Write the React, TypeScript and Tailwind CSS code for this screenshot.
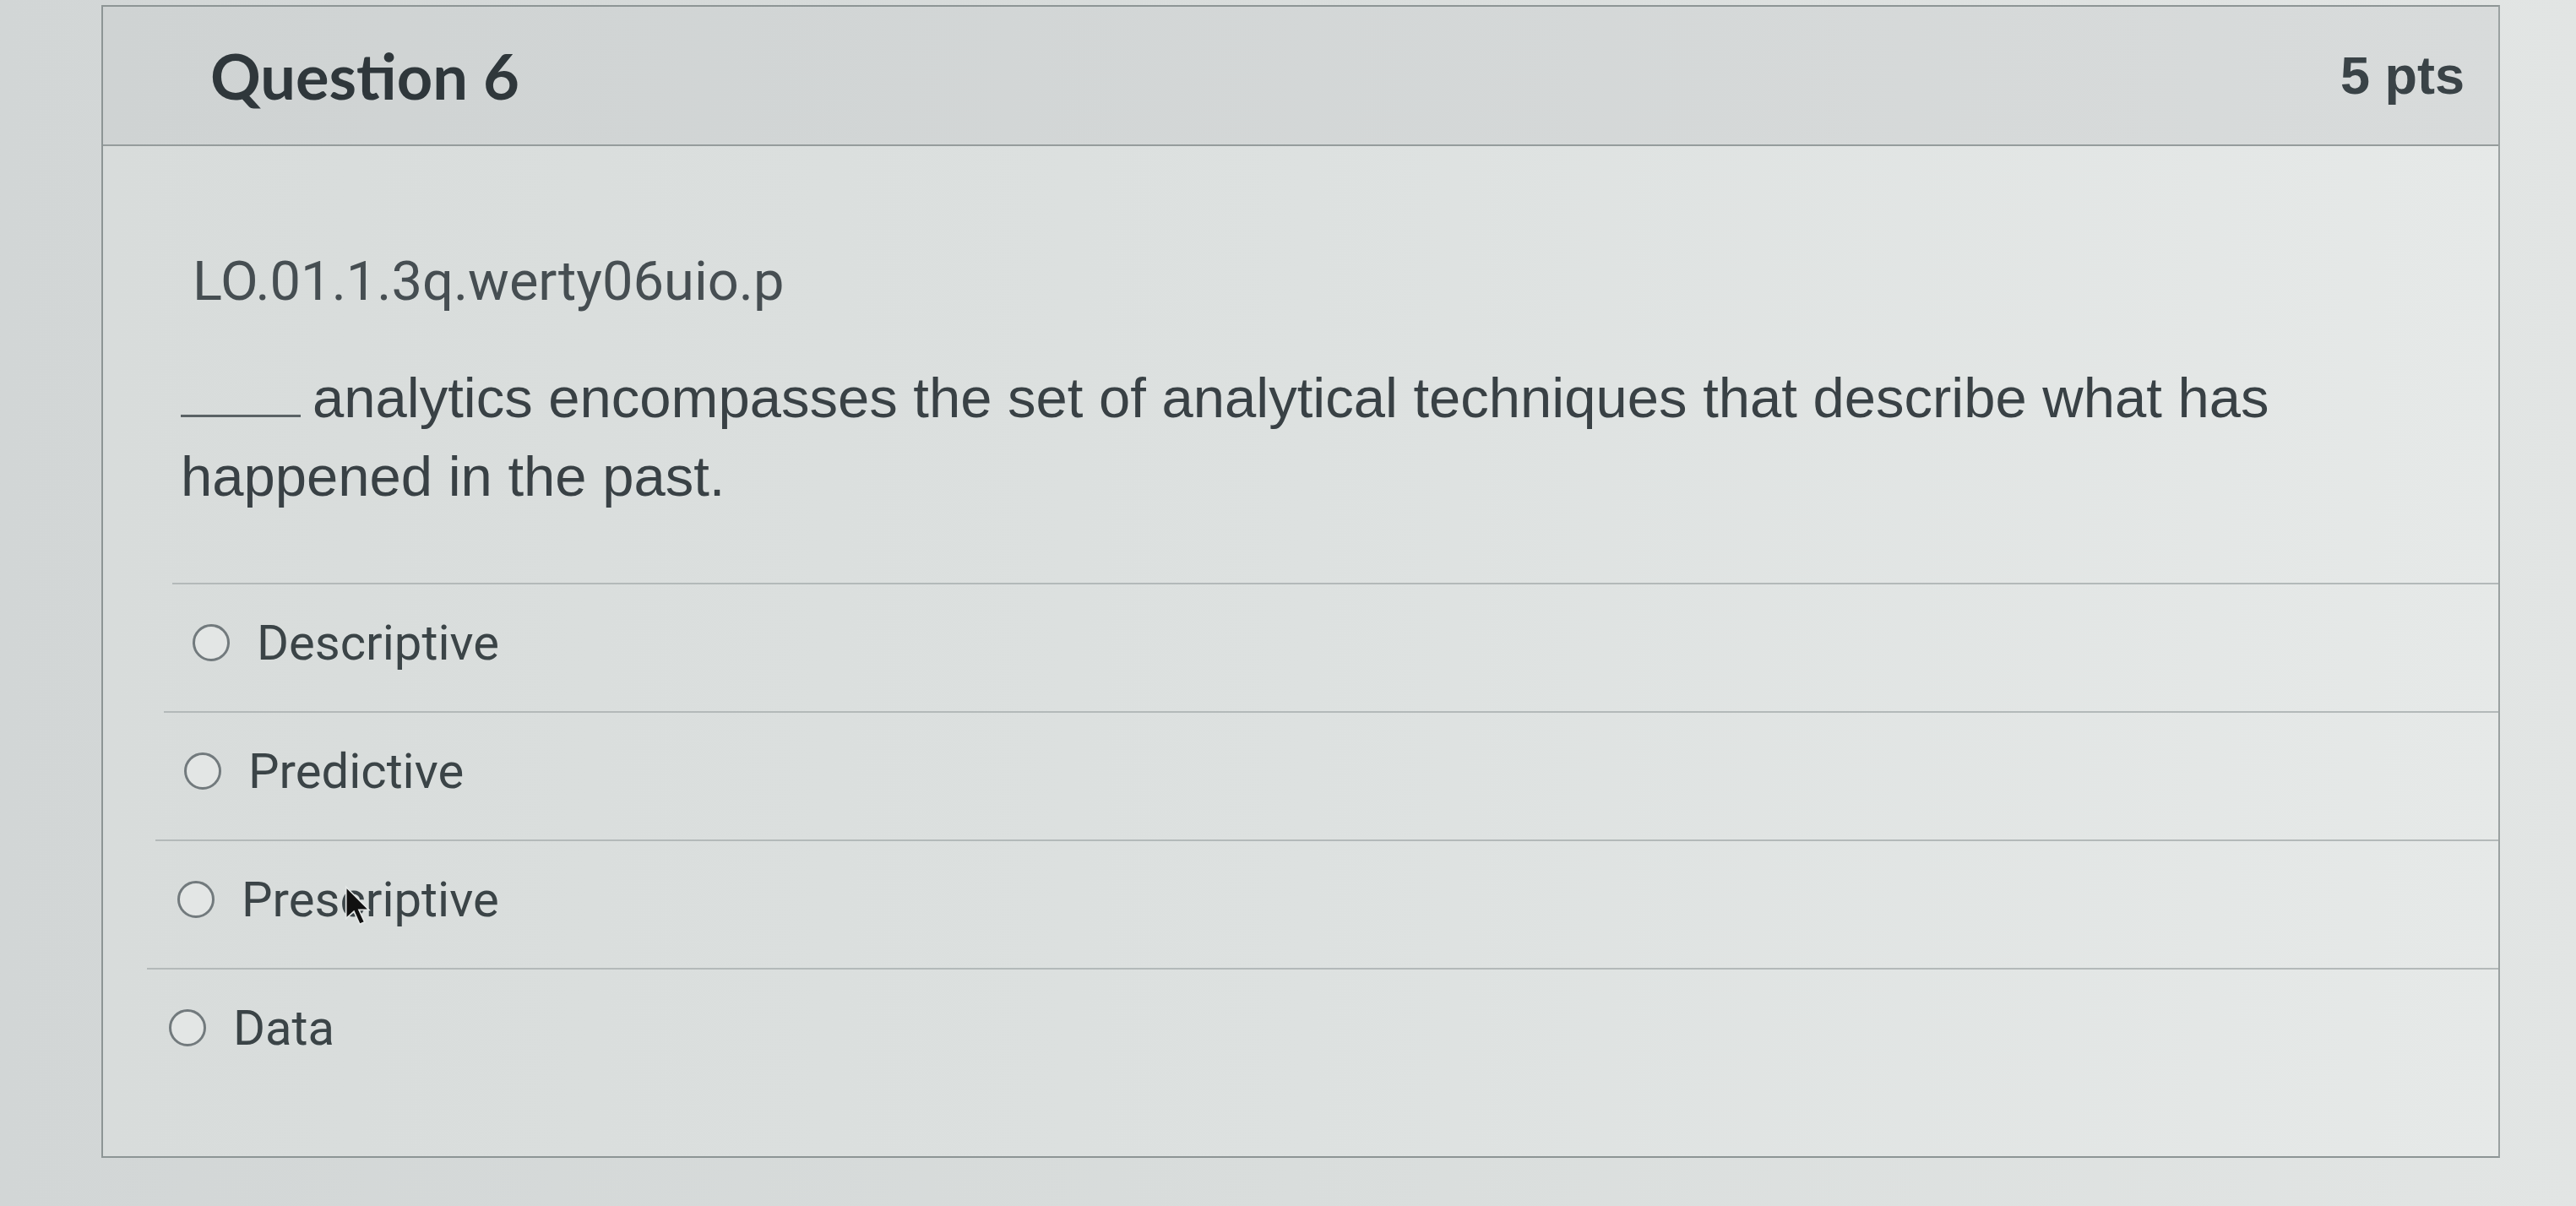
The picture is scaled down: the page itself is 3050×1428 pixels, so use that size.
import React from 'react';

const options = ['Descriptive', 'Predictive', 'Prescriptive', 'Data'];

// slight left drift per row, like the photo's perspective
const rowShift = ['ml-[-10px] pl-[24px]', 'ml-[-20px] pl-[24px]', 'ml-[-30px] pl-[26px]', 'ml-[-40px] pl-[26px]'];

function Cursor() {
  return (
    <svg
      viewBox="0 0 20 30"
      className="absolute left-[224px] top-[52px] h-[52px] w-[34px]"
    >
      <path d="M1 1 L1 23 L6.5 18 L10.5 27 L14 25.5 L10 17 L17 17 Z" fill="#111" stroke="#e5e8e7" strokeWidth="1" />
    </svg>
  );
}

export default function App() {
  return (
    <div className="w-full h-[1428px] bg-linear-to-r from-[#d2d6d6] via-[#d9dddc] to-[#e2e5e4] pt-[6px] pl-[120px] pr-[90px] overflow-hidden">
      <div className="h-[1365px] flex flex-col border-2 border-[#8d9595] border-r-[#9aa1a1]">
        <div className="h-[165px] shrink-0 flex items-center justify-between pl-[127px] pr-[40px] bg-linear-to-r from-[#cfd3d3] to-[#d8dbdb] border-b-2 border-[#959c9c]">
          <h2 className="font-['Lato',sans-serif] font-bold text-[74px] text-[#2f373b] leading-none">
            Question 6
          </h2>
          <span className="font-['Liberation_Sans',Arial,sans-serif] font-bold text-[63px] text-[#3a4347] leading-none">
            5 pts
          </span>
        </div>

        <div className="flex-1 bg-linear-to-r from-[#d8dcdb] via-[#dde1e0] to-[#e6e9e8] pl-[92px] pt-[128px]">
          <p className="pl-[14px] font-['Roboto',sans-serif] text-[65px] leading-none text-[#464e52]">
            LO.01.1.3q.werty06uio.p
          </p>

          <p className="mt-[58px] font-['Liberation_Sans',Arial,sans-serif] text-[67px] leading-[93px] text-[#394145]">
            <span className="inline-block w-[142px] border-b-[3px] border-[#5a6265] align-baseline mr-[14px]"></span>
            analytics encompasses the set of analytical techniques that describe what has
            <br />
            happened in the past.
          </p>

          <div className="mt-[80px] flex flex-col">
            {options.map((opt, i) => (
              <div
                key={opt}
                className={`relative h-[152px] pb-[12px] flex items-center gap-[32px] border-t-2 border-[#b3b9b9] ${rowShift[i]}`}
              >
                <span className="w-[44px] h-[44px] rounded-full border-[3px] border-[#727a7d] bg-[#e3e6e5] shrink-0"></span>
                <span className="font-['Roboto',sans-serif] text-[58px] leading-none text-[#3b4447]">
                  {opt}
                </span>
                {opt === 'Prescriptive' && <Cursor />}
              </div>
            ))}
          </div>
        </div>
      </div>
    </div>
  );
}
